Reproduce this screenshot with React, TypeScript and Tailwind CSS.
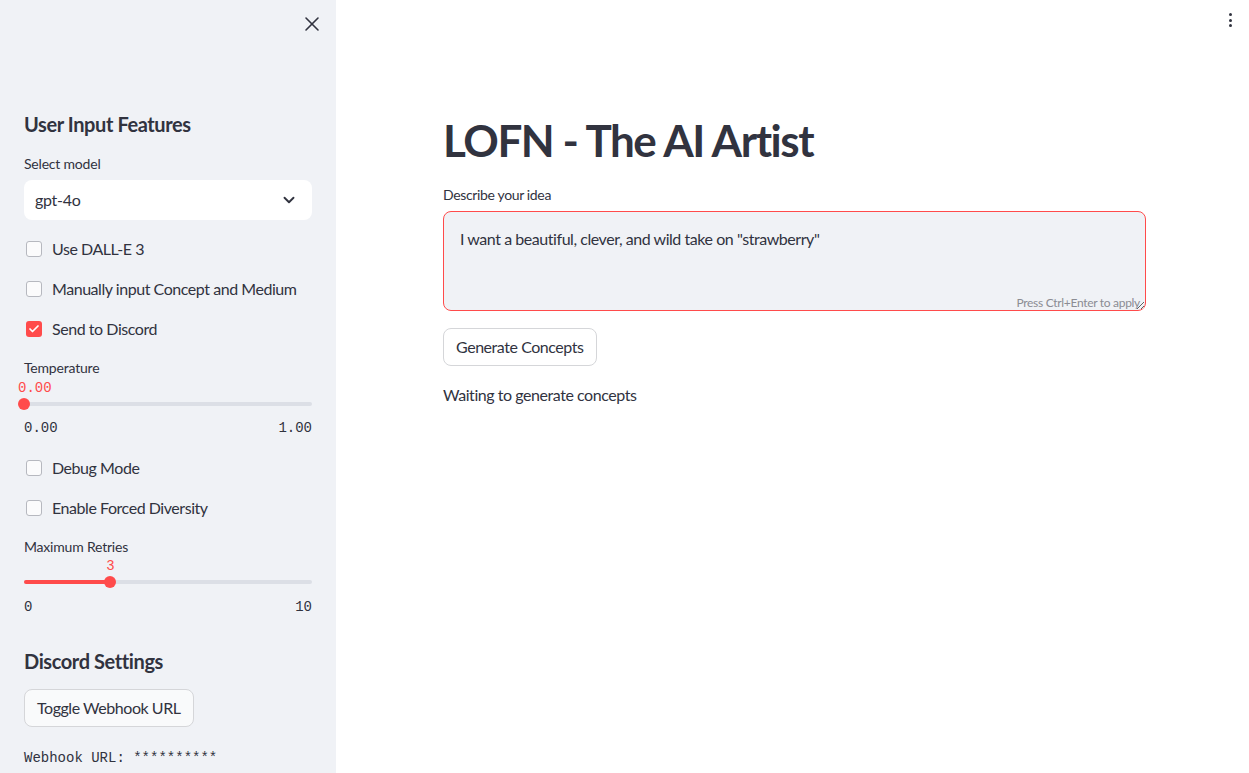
import { X, ChevronDown, Check } from "lucide-react";

const sans = "font-['Lato','Noto_Sans',sans-serif]";
const mono = "font-['Liberation_Mono','DejaVu_Sans_Mono',monospace]";

function CheckRow({ label, checked = false }: { label: string; checked?: boolean }) {
  return (
    <div className="flex items-center h-6 gap-[10px]">
      {checked ? (
        <div className="w-4 h-4 ml-[2px] rounded-[3px] bg-[#ff4b4b] flex items-center justify-center">
          <Check size={12} strokeWidth={3.5} className="text-white" />
        </div>
      ) : (
        <div className="w-4 h-4 ml-[2px] rounded-[3px] border border-[#b6b8bf] bg-white/70"></div>
      )}
      <span className="text-[16px] leading-6 tracking-[-0.45px] text-[#31333f]">{label}</span>
    </div>
  );
}

function Slider({
  value,
  pct,
  mt,
  atStart = false,
}: {
  value: string;
  pct: number;
  mt: string;
  atStart?: boolean;
}) {
  return (
    <div className={mt}>
      <div className="relative h-4">
        <span
          className={`absolute top-0 text-[14px] leading-4 text-[#ff4b4b] ${mono} ${atStart ? "-left-[6px]" : "-translate-x-1/2"}`}
          style={atStart ? undefined : { left: `${pct}%` }}
        >
          {value}
        </span>
      </div>
      <div className="relative h-4 flex items-center">
        <div className="w-full h-1 rounded-full bg-[#dcdfe6]"></div>
        <div
          className="absolute left-0 h-1 rounded-full bg-[#ff4b4b]"
          style={{ width: `${pct}%` }}
        ></div>
        <div
          className="absolute w-3 h-3 -ml-[6px] rounded-full bg-[#ff4b4b]"
          style={{ left: `${pct}%` }}
        ></div>
      </div>
    </div>
  );
}

export default function App() {
  return (
    <div className={`flex w-full h-[773px] overflow-hidden bg-white text-[#31333f] ${sans}`}>
      {/* Sidebar */}
      <aside className="w-[336px] shrink-0 h-full bg-[#f0f2f6] px-6">
        <div className="flex justify-end h-[36px] pt-3 -mr-3">
          <X size={24} strokeWidth={1.6} className="text-[#31333f]" />
        </div>

        <h2 className="mt-[74px] text-[20px] leading-7 font-bold tracking-[-0.4px]">User Input Features</h2>

        <div className="mt-4 text-[14px] leading-5 tracking-[-0.2px]">Select model</div>
        <div className="mt-[6px] h-10 rounded-lg bg-white flex items-center justify-between pl-[11px] pr-[14px]">
          <span className="text-[16px] tracking-[-0.3px]">gpt-4o</span>
          <ChevronDown size={18} strokeWidth={2.5} className="text-[#31333f]" />
        </div>

        <div className="mt-[17px] flex flex-col gap-4">
          <CheckRow label="Use DALL-E 3" />
          <CheckRow label="Manually input Concept and Medium" />
          <CheckRow label="Send to Discord" checked />
        </div>

        <div className="mt-[17px] text-[14px] leading-5 tracking-[-0.2px]">Temperature</div>
        <Slider value="0.00" pct={0} mt="mt-[2px]" atStart />
        <div className={`mt-[6px] flex justify-between text-[14px] leading-5 ${mono}`}>
          <span>0.00</span>
          <span>1.00</span>
        </div>

        <div className="mt-[18px] flex flex-col gap-4">
          <CheckRow label="Debug Mode" />
          <CheckRow label="Enable Forced Diversity" />
        </div>

        <div className="mt-[17px] text-[14px] leading-5 tracking-[-0.2px]">Maximum Retries</div>
        <Slider value="3" pct={30} mt="mt-[1px]" />
        <div className={`mt-[7px] flex justify-between text-[14px] leading-5 ${mono}`}>
          <span>0</span>
          <span>10</span>
        </div>

        <h2 className="mt-[30px] text-[20px] leading-7 font-bold tracking-[-0.4px]">Discord Settings</h2>
        <button className="mt-[14px] h-[38px] px-3 rounded-lg border border-[#d5d6d9] bg-[#f9fafb] text-[16px] tracking-[-0.45px]">
          Toggle Webhook URL
        </button>
        <div className={`mt-[21px] text-[14px] leading-5 ${mono}`}>Webhook URL: **********</div>
      </aside>

      {/* Main */}
      <main className="relative flex-1 h-full">
        <div className="absolute top-[13px] right-[17px] flex flex-col items-center gap-[2.5px]">
          <span className="w-[3px] h-[3px] rounded-full bg-[#31333f]"></span>
          <span className="w-[3px] h-[3px] rounded-full bg-[#31333f]"></span>
          <span className="w-[3px] h-[3px] rounded-full bg-[#31333f]"></span>
        </div>

        <div className="ml-[107px] w-[703px] pt-[114px]">
          <h1 className="text-[44px] leading-[52px] font-bold tracking-[-1.45px]">LOFN - The AI Artist</h1>

          <div className="mt-[19px] text-[14px] leading-5 tracking-[-0.35px]">Describe your idea</div>
          <div className="relative mt-[6px] h-[100px]">
            <textarea
              defaultValue={'I want a beautiful, clever, and wild take on "strawberry"'}
              className="w-full h-full rounded-lg border border-[#ff4b4b] bg-[#f0f2f6] px-4 py-[15px] text-[16px] leading-6 tracking-[-0.45px] text-[#31333f] outline-none resize-y"
            />
            <span className="absolute right-[6px] bottom-0 text-[12px] leading-4 tracking-[-0.3px] text-[#8b8c93]">
              Press Ctrl+Enter to apply
            </span>
          </div>

          <button className="mt-[17px] h-[38px] px-3 rounded-lg border border-[#d5d6d9] bg-white text-[16px] tracking-[-0.45px]">
            Generate Concepts
          </button>

          <p className="mt-[17px] text-[16px] leading-6 tracking-[-0.45px]">Waiting to generate concepts</p>
        </div>
      </main>
    </div>
  );
}
